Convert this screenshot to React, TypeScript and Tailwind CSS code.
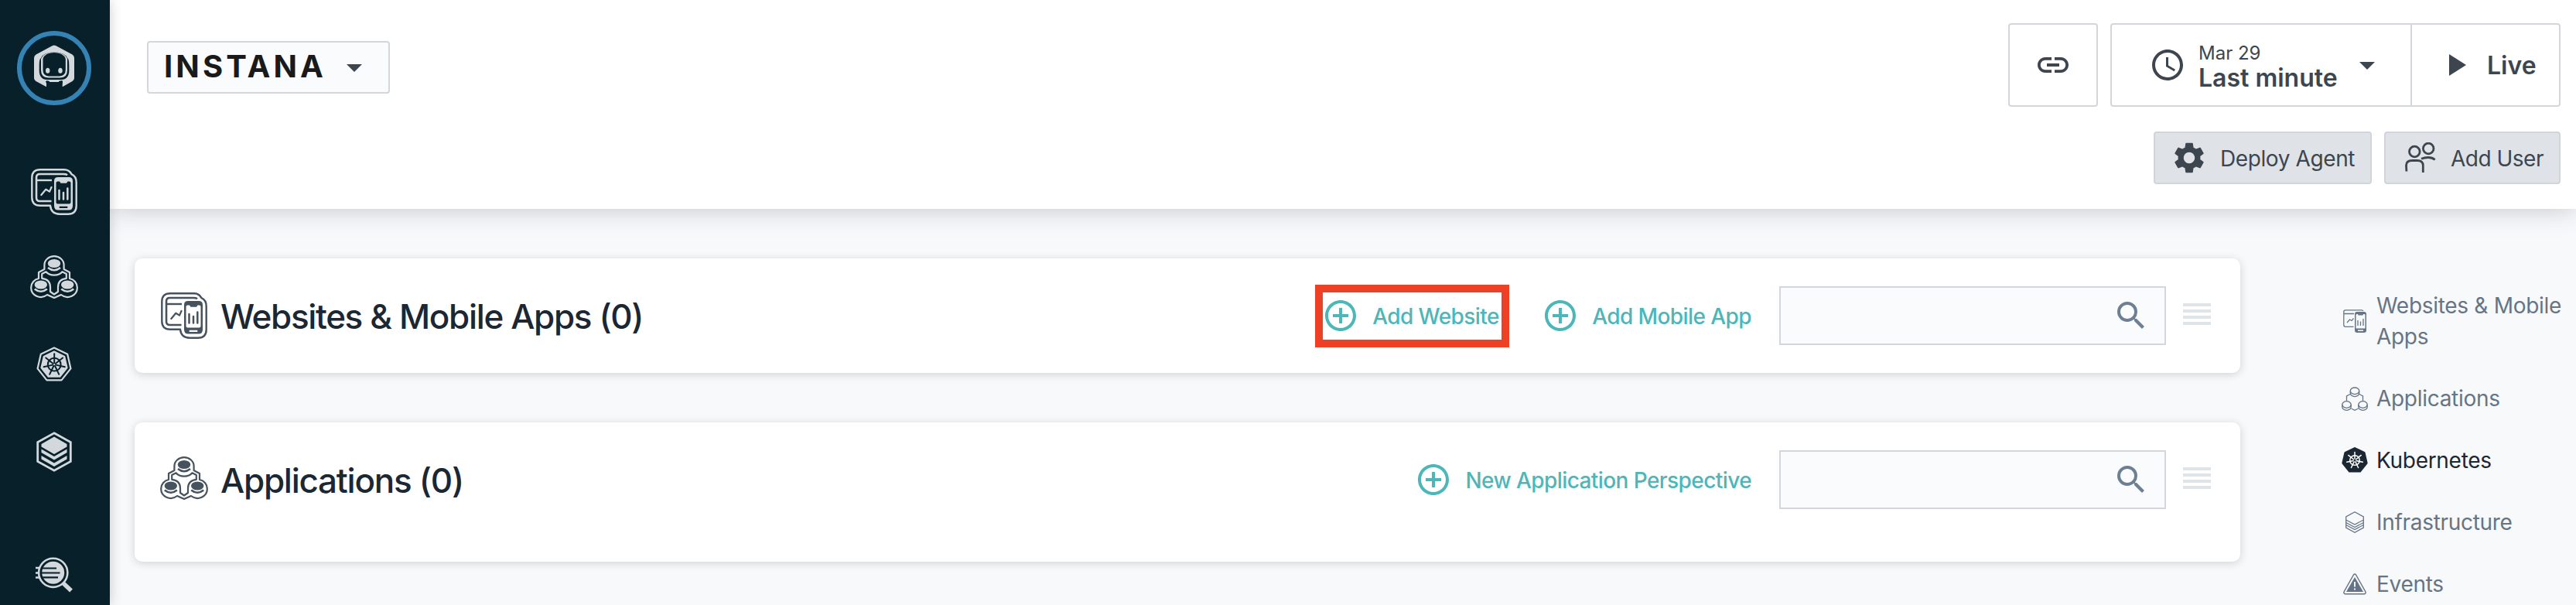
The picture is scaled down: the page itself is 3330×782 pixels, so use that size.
import type { ReactNode } from "react";
import { MdSettings, MdAccessTime, MdLink, MdPlayArrow, MdSearch, MdAddCircleOutline, MdArrowDropDown } from "react-icons/md";

function poly(n: number, r: number, cx: number, cy: number) {
  return Array.from({ length: n }, (_, i) => {
    const a = (i * 2 * Math.PI) / n - Math.PI / 2;
    return `${(cx + r * Math.cos(a)).toFixed(2)},${(cy + r * Math.sin(a)).toFixed(2)}`;
  }).join(" ");
}

function RobotLogo() {
  return (
    <svg width="96" height="96" viewBox="0 0 96 96">
      <circle cx="48" cy="48" r="45" fill="none" stroke="#3583b5" strokeWidth="6" />
      <path d="M44 20 Q48 17 52 20 L71.5 30.5 Q74 32 74 35 V61 Q74 63.5 71.5 65 L58.8 72.3 Q57.8 68 59 65 H37 Q38.8 68 38 72.3 L24.5 65 Q22 63.5 22 61 V35 Q22 32 24.5 30.5 Z" fill="#d3d8dc" />
      <path d="M31 35 Q28.7 36 28.7 44 V51 Q28.7 62.7 39 63 H57 Q67.3 62.7 67.3 51 V44 Q67.3 36 65 35 Q62 27.5 48 27.5 Q34 27.5 31 35 Z" fill="#08202a" />
      <path d="M31 36 Q34 27.5 48 27.5 Q62 27.5 65 36 V51 Q65 60 56 60.5 H40 Q31 60 31 51 Z" fill="#d3d8dc" />
      <path d="M33.5 36 Q36 28 48 28 Q60 28 62.8 36 V50 Q62.8 58 55 58.4 H41 Q33.5 58 33.5 50 Z" fill="#08202a" />
      <path d="M38 64 Q48 67.5 58 64 L59 65 L58.5 70 Q56 66.5 48 66.5 Q40 66.5 38.5 70 Z" fill="#08202a" />
      <path d="M42 64.3 H54 V66 H42 Z" fill="#d3d8dc" />
      <ellipse cx="39.7" cy="51.3" rx="2.7" ry="3.5" fill="#d3d8dc" />
      <ellipse cx="56" cy="51.3" rx="2.7" ry="3.5" fill="#d3d8dc" />
    </svg>
  );
}

function WebsitesIcon() {
  return (
    <svg width="60" height="60" viewBox="0 0 60 60" fill="none" stroke="currentColor" strokeWidth="2.4" strokeLinejoin="round" strokeLinecap="round">
      <path d="M12 1.3 H43 Q49.5 1.3 52.5 7.2 Q58.7 10 58.7 18 V48 Q58.7 58.7 48 58.7 H37 Q26 58.7 25 47.7 H12 Q1.3 47.7 1.3 37 V12 Q1.3 1.3 12 1.3 Z" />
      <path d="M26.5 42 H11.5 Q7 42 7 37.5 V11.5 Q7 7 11.5 7 H42 Q45.5 7 47 8.2" strokeLinecap="butt" strokeWidth="2.6" />
      <path d="M7 15 H27" strokeLinecap="butt" />
      <path d="M13.3 34 L19.3 26.8 L24 29.6 L26.5 24" strokeWidth="2.2" />
      <path fillRule="evenodd" stroke="none" fill="currentColor" d="M35 11 H49 Q54 11 54 16 V48 Q54 53.5 49 53.5 H35 Q30 53.5 30 48 V16 Q30 11 35 11 Z M34.5 16.5 Q32.5 16.5 32.5 18.5 V43.5 Q32.5 45.5 34.5 45.5 H49.5 Q51.5 45.5 51.5 43.5 V18.5 Q51.5 16.5 49.5 16.5 H47.5 L46 18.8 H38.5 L37 16.5 Z M36.7 48.7 V51 H47.3 V48.7 Z" />
      <path d="M36.5 28 V39.5 M42 31 V39.5 M47.3 25.5 V39.5" strokeWidth="2.5" />
    </svg>
  );
}

const DISCS = [
  [31, 10.5],
  [13.8, 38],
  [48.2, 38],
];

function ApplicationsIcon() {
  return (
    <svg width="62" height="56" viewBox="0 0 62 56" fill="none" stroke="currentColor" strokeWidth="2.2" strokeLinejoin="round">
      <path d="M18.4 12.5 A12.6 11.3 0 0 1 43.6 12.5 V18 L51 22 V30 A12.3 12 0 0 1 60.8 41.5 A12.6 11.8 0 0 1 40 51 L31 55 L22 51 A12.6 11.8 0 0 1 1.2 41.5 A12.3 12 0 0 1 11 30 V22 L18.4 18 Z" />
      <path d="M15.2 29.8 V24 L20.5 21.3 Q24 25.6 31 25.6 Q38 25.6 41.5 21.3 L46.8 24 V29.8 Q36 31 36 41 V47 L31 50.5 L26 47 V41 Q26 31 15.2 29.8 Z" />
      {DISCS.map(([x, y]) => (
        <g key={x}>
          <ellipse cx={x} cy={y} rx="8.2" ry="5.6" fill="currentColor" stroke="none" />
          <path d={`M${x - 8} ${y + 5.5} Q${x} ${y + 12} ${x + 8} ${y + 5.5}`} strokeWidth="2.6" />
        </g>
      ))}
    </svg>
  );
}

function Wheel({ c, r, w, color }: { c: number; r: number; w: number; color: string }) {
  return (
    <g stroke={color} strokeWidth={w} fill="none" strokeLinecap="round">
      <circle cx={c} cy={c} r={r * 0.6} />
      {Array.from({ length: 7 }, (_, i) => {
        const a = (i * 2 * Math.PI) / 7 - Math.PI / 2;
        return <line key={i} x1={c + 2 * Math.cos(a)} y1={c + 2 * Math.sin(a)} x2={c + r * Math.cos(a)} y2={c + r * Math.sin(a)} />;
      })}
    </g>
  );
}

function KubernetesNavIcon() {
  return (
    <svg width="46" height="46" viewBox="0 0 46 46">
      <polygon points={poly(7, 22, 23, 23.5)} fill="none" stroke="#d3d8dc" strokeWidth="2.2" strokeLinejoin="round" />
      <polygon points={poly(7, 17, 23, 23.5)} fill="#d3d8dc" stroke="#d3d8dc" strokeWidth="2" strokeLinejoin="round" />
      <Wheel c={23.2} r={14} w={2} color="#08202a" />
    </svg>
  );
}

function LayersNavIcon() {
  return (
    <svg width="46" height="52" viewBox="0 0 46 52">
      <path d="M23 1.8 L44.3 13.5 V38.5 L23 50.2 L1.7 38.5 V13.5 Z" fill="none" stroke="#d3d8dc" strokeWidth="2.8" />
      <path d="M23 6.5 L39.5 16 V19.5 L23 29 L6.5 19.5 V16 Z M6.5 22.5 L23 32 L39.5 22.5 V27 L23 36.5 L6.5 27 Z M6.5 31 L23 40.5 L39.5 31 V35.5 L23 45 L6.5 35.5 Z" fill="#d3d8dc" />
    </svg>
  );
}

function AnalyzeNavIcon() {
  return (
    <svg width="50" height="48" viewBox="0 0 50 48">
      <circle cx="22.7" cy="20.3" r="18.6" fill="none" stroke="#d3d8dc" strokeWidth="2.6" />
      <circle cx="22.7" cy="20.3" r="14.5" fill="#d3d8dc" />
      <path d="M8 14.5 H27 M6 20.5 H31.5 M8 26.3 H29" stroke="#08202a" strokeWidth="2.2" />
      <path d="M0 14 H5 M0 20.5 H4 M0 26.5 H5" stroke="#d3d8dc" strokeWidth="2.6" />
      <path d="M35.5 33.5 L46 43.5" stroke="#d3d8dc" strokeWidth="5.5" />
    </svg>
  );
}

function UsersIcon() {
  return (
    <svg width="40" height="40" viewBox="0 0 40 40" fill="none" stroke="currentColor" strokeWidth="2.8">
      <circle cx="12.3" cy="12" r="6.8" />
      <circle cx="30.2" cy="8" r="6.8" />
      <path d="M1.9 37.5 L1.5 30 Q1.5 23.5 9 23.5 H16 Q23.3 23.5 23.3 30 V39" />
      <path d="M21 21.3 Q25 19.5 30 19.5 Q35 19.5 38.7 22.5" />
    </svg>
  );
}

function SmallWebsitesIcon() {
  return (
    <svg width="30" height="30" viewBox="0 0 30 30" fill="none" stroke="currentColor" strokeWidth="1.3">
      <path d="M13.5 22.3 H3 Q0.8 22.3 0.8 20 V3 Q0.8 0.8 3 0.8 H24 Q25.5 0.8 26 2 M0.8 5.5 H14 M5 17 L8.5 13 L11 14.5 L13.5 11.5" />
      <path fillRule="evenodd" stroke="none" fill="currentColor" d="M18 3 H27 Q30 3 30 6 V27 Q30 30 27 30 H18 Q15 30 15 27 V6 Q15 3 18 3 Z M16.5 7 V24.5 H28.5 V7 Q28.5 6 27 6 H26 L25.5 7.5 H19.5 L19 6 H18 Q16.5 6 16.5 7 Z M19 26.6 V28 H26 V26.6 Z" />
      <path d="M19 14 V21 M22.5 15.5 V21 M26 12 V21" />
    </svg>
  );
}

const SMALL_DISCS = [
  [17, 5.3],
  [6.5, 23],
  [27.5, 23],
];

function SmallApplicationsIcon() {
  return (
    <svg width="34" height="31" viewBox="0 0 34 31" fill="none" stroke="currentColor" strokeWidth="1.3">
      {SMALL_DISCS.map(([x, y]) => (
        <g key={x}>
          <ellipse cx={x} cy={y} rx="5.7" ry="4.3" />
          <path d={`M${x - 5.7} ${y} v3 a5.7 4.3 0 0 0 11.4 0 v-3`} />
        </g>
      ))}
      <path d="M11 9.5 L6.5 12 V18 M23 9.5 L27.5 12 V18 M12.5 28 L17 30.3 L21.5 28" />
    </svg>
  );
}

function SmallKubernetesIcon() {
  return (
    <svg width="34" height="34" viewBox="0 0 34 34">
      <polygon points={poly(7, 15.5, 17, 17)} fill="currentColor" stroke="currentColor" strokeWidth="3" strokeLinejoin="round" />
      <Wheel c={17} r={10.5} w={1.5} color="#ffffff" />
    </svg>
  );
}

function SmallLayersIcon() {
  return (
    <svg width="24" height="28" viewBox="0 0 24 28" fill="none" stroke="currentColor" strokeWidth="1.3">
      <path d="M12 0.8 L23.3 7 V21 L12 27.2 L0.7 21 V7 Z M0.7 11 L12 17 L23.3 11 M0.7 14.5 L12 20.5 L23.3 14.5 M0.7 17.5 L12 23.5 L23.3 17.5" />
    </svg>
  );
}

function SmallEventsIcon() {
  return (
    <svg width="30" height="28" viewBox="0 0 30 28">
      <path d="M13.5 2 Q15 0 16.5 2 L29 24 Q29.5 26.5 27.5 26.7 H2.5 Q0.5 26.5 1 24 Z" fill="none" stroke="currentColor" strokeWidth="1.4" />
      <path d="M15 5 L26 24 H4 Z" fill="currentColor" />
      <path d="M15 11 V17.5 M15 19.5 V21.5" stroke="#ffffff" strokeWidth="1.8" />
    </svg>
  );
}

function AddLink({ label }: { label: string }) {
  return (
    <div className="flex shrink-0 items-center text-[#4db6b8]">
      <MdAddCircleOutline size={48} className="shrink-0" />
      <span className="ml-[17px] pt-0.5 text-[28px] leading-9 font-medium tracking-[-0.58px] whitespace-nowrap">{label}</span>
    </div>
  );
}

function SearchBox() {
  return (
    <div className="flex h-[76px] w-[500px] items-center justify-end border-2 border-[#d3d7db] bg-[#fafbfd] pr-[19px] text-[#6c7f93]">
      <MdSearch size={48} />
    </div>
  );
}

function DragHandle() {
  return (
    <div className="mb-1 ml-[22px] flex w-9 flex-col gap-1">
      <div className="h-1 bg-[#dfe4e8]" />
      <div className="h-1 bg-[#dfe4e8]" />
      <div className="h-1 bg-[#dfe4e8]" />
      <div className="h-1 bg-[#dfe4e8]" />
    </div>
  );
}

function NavItem({ icon, label, active = false }: { icon: ReactNode; label: string; active?: boolean }) {
  return (
    <div className={active ? "flex items-center text-[#1b2733]" : "flex items-center text-[#667585]"}>
      <div className="flex w-[34px] shrink-0 justify-center">{icon}</div>
      <span className="ml-[11px] text-[28px] leading-10 tracking-[-0.3px]">{label}</span>
    </div>
  );
}

export default function App() {
  return (
    <div className="flex h-[782px] w-[3330px] overflow-hidden bg-[#f8f9fb] font-['Inter',sans-serif]">
      <aside className="z-20 flex w-[142px] shrink-0 flex-col items-center bg-[#08202a] pr-0.5 text-[#d3d8dc] shadow-[0_0_16px_rgba(0,0,0,0.2)]">
        <div className="mt-10"><RobotLogo /></div>
        <div className="mt-[82px]"><WebsitesIcon /></div>
        <div className="mt-[52px]"><ApplicationsIcon /></div>
        <div className="mt-[62px]"><KubernetesNavIcon /></div>
        <div className="mt-[64px]"><LayersNavIcon /></div>
        <div className="mt-[110px] ml-0.5"><AnalyzeNavIcon /></div>
      </aside>
      <div className="flex flex-1 flex-col">
        <header className="z-10 flex h-[270px] shrink-0 justify-between bg-white pr-5 pl-12 shadow-[0_0_32px_rgba(30,45,55,0.25)]">
          <div className="mt-[53px] flex h-[68px] w-[314px] items-center rounded border-2 border-[#d3d7db] bg-[#fafbfd] pl-5">
            <span className="mt-[-2px] w-[217px] text-[40px] leading-10 font-bold tracking-[4.1px] text-[#1a1a1a]">INSTANA</span>
            <MdArrowDropDown size={48} className="ml-[5px] text-[#3d464f]" />
          </div>
          <div className="mt-[30px] flex flex-col items-end text-[#3d464f]">
            <div className="flex gap-4">
              <div className="flex h-[108px] w-[116px] items-center justify-center rounded border-2 border-[#d3d7db]">
                <MdLink size={48} />
              </div>
              <div className="flex h-[108px] w-[582px] rounded border-2 border-[#d3d7db]">
                <div className="flex w-[388px] items-center border-r-2 border-[#d3d7db] pl-12">
                  <MdAccessTime size={48} />
                  <div className="ml-4 w-[190px] pt-0.5">
                    <div className="text-2xl leading-8">Mar 29</div>
                    <div className="text-[32px] leading-8 font-semibold">Last minute</div>
                  </div>
                  <MdArrowDropDown size={48} className="ml-1" />
                </div>
                <div className="flex items-center pl-8">
                  <MdPlayArrow size={48} />
                  <span className="ml-[17px] pt-0.5 text-[32px] leading-9 font-semibold">Live</span>
                </div>
              </div>
            </div>
            <div className="mt-8 flex gap-4">
              <div className="flex h-[68px] w-[282px] items-center rounded border-2 border-[#d0d5da] bg-[#dfe3e7] pl-5">
                <MdSettings size={48} />
                <span className="ml-4 pt-0.5 text-[28px] tracking-[-0.4px]">Deploy Agent</span>
              </div>
              <div className="flex h-[68px] w-[228px] items-center rounded border-2 border-[#d0d5da] bg-[#dfe3e7] pl-[25px]">
                <UsersIcon />
                <span className="ml-[19px] pt-0.5 text-[28px] tracking-[-0.5px]">Add User</span>
              </div>
            </div>
          </div>
        </header>
        <div className="flex flex-1">
          <main className="ml-8 flex w-[2722px] flex-col gap-16 pt-16">
            <section className="flex h-[148px] items-start rounded-[10px] bg-white pr-[38px] pl-[34px] shadow-[0_2px_12px_rgba(0,0,0,0.16)]">
              <div className="mt-11 flex items-start text-[#46525d]">
                <WebsitesIcon />
                <h2 className="ml-[17px] pt-px text-[44px] leading-[60px] font-medium tracking-[-1.36px] text-[#1b2733]">Websites &amp; Mobile Apps (0)</h2>
              </div>
              <div className="mt-9 ml-auto flex items-center">
                <div className="-my-1 mr-[42px] flex h-[81px] w-[251px] items-center border-10 border-[#ed4024]">
                  <div className="-ml-px"><AddLink label="Add Website" /></div>
                </div>
                <div className="mr-9"><AddLink label="Add Mobile App" /></div>
                <SearchBox />
                <DragHandle />
              </div>
            </section>
            <section className="flex h-[180px] items-start rounded-[10px] bg-white pr-[38px] pl-[33px] shadow-[0_2px_12px_rgba(0,0,0,0.16)]">
              <div className="mt-11 flex items-start text-[#46525d]">
                <ApplicationsIcon />
                <h2 className="ml-4 pt-px text-[44px] leading-[60px] font-medium tracking-[-1.25px] text-[#1b2733]">Applications (0)</h2>
              </div>
              <div className="mt-9 ml-auto flex items-center">
                <div className="mr-9"><AddLink label="New Application Perspective" /></div>
                <SearchBox />
                <DragHandle />
              </div>
            </section>
          </main>
          <nav className="mt-[105px] ml-[131px] flex w-[300px] flex-col gap-10">
            <NavItem icon={<SmallWebsitesIcon />} label="Websites & Mobile Apps" />
            <NavItem icon={<SmallApplicationsIcon />} label="Applications" />
            <NavItem icon={<SmallKubernetesIcon />} label="Kubernetes" active />
            <NavItem icon={<SmallLayersIcon />} label="Infrastructure" />
            <NavItem icon={<SmallEventsIcon />} label="Events" />
          </nav>
        </div>
      </div>
    </div>
  );
}
